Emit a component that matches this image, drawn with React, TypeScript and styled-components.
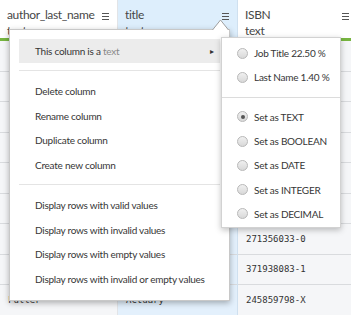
import styled, { createGlobalStyle } from "styled-components";

const GlobalStyle = createGlobalStyle`
  html, body {
    margin: 0;
    padding: 0;
    background: #ffffff;
    overflow: hidden;
  }
  body {
    font-family: "Lato", "Open Sans", sans-serif;
    color: #3a3a3a;
  }
`;

type Column = {
  name: string;
  type: string;
  width: number;
  selected?: boolean;
  values: string[];
};

const columns: Column[] = [
  {
    name: "author_last_name",
    type: "text",
    width: 118,
    values: ["", "", "", "", "", "", "", "", "Fuller"],
  },
  {
    name: "title",
    type: "text",
    width: 120,
    selected: true,
    values: ["", "", "", "", "", "", "", "", "Actuary"],
  },
  {
    name: "ISBN",
    type: "text",
    width: 120,
    values: [
      "",
      "",
      "",
      "",
      "",
      "",
      "271356033-0",
      "371938083-1",
      "245859798-X",
    ],
  },
];

const App = (): JSX.Element => {
  return (
    <>
      <GlobalStyle />
      <Page>
        <Grid>
          {columns.map((col) => (
            <Col key={col.name} $width={col.width} $selected={col.selected}>
              <Head $selected={col.selected}>
                <HeadText>
                  <ColName>{col.name}</ColName>
                  <ColName>{col.type}</ColName>
                </HeadText>
                <Burger>
                  <span />
                  <span />
                  <span />
                </Burger>
              </Head>
              <Quality />
              {col.values.map((v, i) => (
                <Cell key={i} $selected={col.selected}>
                  {v}
                </Cell>
              ))}
            </Col>
          ))}
        </Grid>

        <Menu>
          <Pointer width="17" height="11" viewBox="0 0 17 11">
            <path d="M0.5 11 L8.5 1 L16.5 11" fill="#ffffff" stroke="#9f9f9f" strokeWidth="1" />
          </Pointer>
          <TypeItem>
            This column is a <Muted>text</Muted>
            <Caret>▸</Caret>
          </TypeItem>
          <Divider />
          <Item>Delete column</Item>
          <Item>Rename column</Item>
          <Item>Duplicate column</Item>
          <Item>Create new column</Item>
          <Divider />
          <Item>Display rows with valid values</Item>
          <Item>Display rows with invalid values</Item>
          <Item>Display rows with empty values</Item>
          <Item>Display rows with invalid or empty values</Item>
        </Menu>

        <SubMenu>
          <SubItem>
            <Radio />
            Job Title 22.50 %
          </SubItem>
          <SubItem>
            <Radio />
            Last Name 1.40 %
          </SubItem>
          <SubDivider />
          <SubItem>
            <Radio $checked />
            Set as TEXT
          </SubItem>
          <SubItem>
            <Radio />
            Set as BOOLEAN
          </SubItem>
          <SubItem>
            <Radio />
            Set as DATE
          </SubItem>
          <SubItem>
            <Radio />
            Set as INTEGER
          </SubItem>
          <SubItem>
            <Radio />
            Set as DECIMAL
          </SubItem>
        </SubMenu>
      </Page>
    </>
  );
};

const Page = styled.div`
  position: relative;
  width: 351px;
  height: 315px;
  overflow: hidden;
`;

const Grid = styled.div`
  display: flex;
`;

const Col = styled.div<{ $width: number; $selected?: boolean }>`
  flex: 0 0 ${(p) => p.$width}px;
  display: flex;
  flex-direction: column;
  border-right: 1px solid ${(p) => (p.$selected ? "#cfe0ef" : "#e2e4e7")};
  box-sizing: border-box;
`;

const Head = styled.div<{ $selected?: boolean }>`
  height: 38px;
  box-sizing: border-box;
  padding: 8px 8px 0 7px;
  display: flex;
  justify-content: space-between;
  background: ${(p) => (p.$selected ? "#ddeefc" : "#ffffff")};
`;

const HeadText = styled.div`
  display: flex;
  flex-direction: column;
  gap: 2px;
`;

const ColName = styled.div`
  font-size: 12px;
  line-height: 14px;
  letter-spacing: -0.35px;
  color: #474747;
`;

const Burger = styled.div`
  display: flex;
  flex-direction: column;
  gap: 2px;
  margin-top: 5px;
  span {
    display: block;
    width: 7px;
    height: 1px;
    background: #555;
  }
`;

const Quality = styled.div`
  height: 3px;
  background: #77b540;
`;

const Cell = styled.div<{ $selected?: boolean }>`
  height: 30.5px;
  box-sizing: border-box;
  padding: 0 8px;
  display: flex;
  align-items: center;
  border-bottom: 1px solid #d9dbde;
  background: ${(p) => (p.$selected ? "#e3f0fc" : "#f5f6f8")};
  font-family: "DejaVu Sans Mono", monospace;
  font-size: 9px;
  color: #333;
`;

const Menu = styled.div`
  position: absolute;
  left: 9px;
  top: 29px;
  width: 221px;
  box-sizing: border-box;
  padding: 9px 9px 9px 9px;
  background: #ffffff;
  border: 1px solid #c8c8c8;
  box-shadow: 0 2px 6px rgba(0, 0, 0, 0.3);
  font-size: 10px;
  letter-spacing: -0.25px;
  color: #363636;
`;

const Pointer = styled.svg`
  position: absolute;
  right: 0;
  top: -11px;
  display: block;
  overflow: visible;
`;

const TypeItem = styled.div`
  position: relative;
  height: 24px;
  display: flex;
  align-items: center;
  padding-left: 16px;
  background: #ececec;
  white-space: pre;
`;

const Muted = styled.span`
  color: #8a8a8a;
`;

const Caret = styled.span`
  position: absolute;
  right: 6px;
  font-size: 8px;
  color: #333;
`;

const Divider = styled.div`
  height: 1px;
  background: #e4e4e4;
  margin: 7px 0 8px;
`;

const Item = styled.div`
  height: 24.5px;
  display: flex;
  align-items: center;
  padding-left: 16px;
  white-space: nowrap;
`;

const SubMenu = styled.div`
  position: absolute;
  left: 221px;
  top: 37px;
  width: 120px;
  box-sizing: border-box;
  padding: 3px 0 1px;
  background: #ffffff;
  border: 1px solid #d2d2d2;
  box-shadow: 0 2px 6px rgba(0, 0, 0, 0.25);
  font-size: 10px;
  letter-spacing: -0.25px;
  color: #363636;
`;

const SubItem = styled.div`
  height: 24.3px;
  display: flex;
  align-items: center;
  gap: 6px;
  padding-left: 15px;
  white-space: nowrap;
`;

const SubDivider = styled.div`
  height: 1px;
  background: #dcdcdc;
  margin: 7px 0;
`;

const Radio = styled.span<{ $checked?: boolean }>`
  position: relative;
  width: 11px;
  height: 11px;
  flex: 0 0 11px;
  box-sizing: border-box;
  border-radius: 50%;
  border: 1px solid #b8b8b8;
  background: linear-gradient(#f0f0f0, #d8d8d8);
  &::after {
    content: "";
    display: ${(p) => (p.$checked ? "block" : "none")};
    position: absolute;
    left: 2.5px;
    top: 2.5px;
    width: 4px;
    height: 4px;
    border-radius: 50%;
    background: #555;
  }
`;

export default App;
